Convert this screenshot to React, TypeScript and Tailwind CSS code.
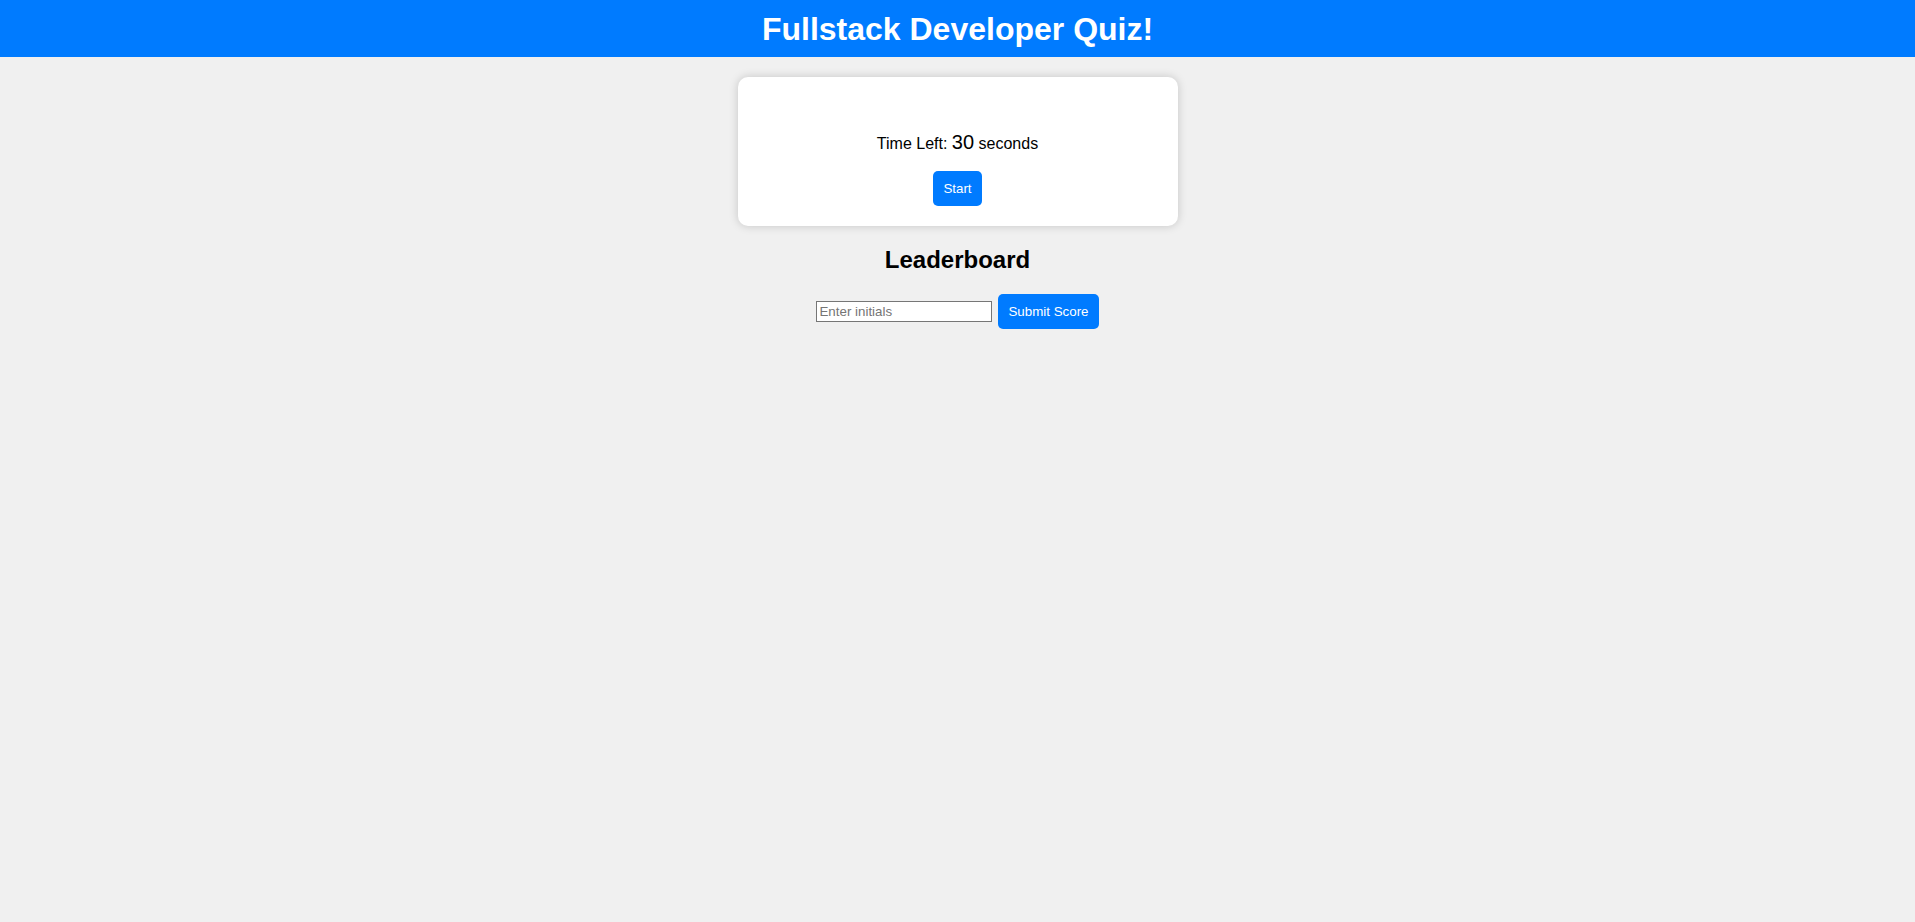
export default function App() {
  return (
    <div className="min-h-screen bg-[#f0f0f0] font-['Liberation_Sans',Arial,sans-serif] text-black">
      {/* Header */}
      <header className="flex h-[57px] items-center justify-center bg-[#007bff]">
        <h1 className="text-[32px] font-bold text-white">Fullstack Developer Quiz!</h1>
      </header>

      {/* Quiz card */}
      <div className="mx-auto mt-5 w-[440px] rounded-[10px] bg-white p-5 text-center shadow-[0_0_10px_rgba(0,0,0,0.18)]">
        <div className="h-[35px]" />
        <p className="text-[16px] leading-[23px]">
          Time Left: <span className="text-[20px] leading-none">30</span> seconds
        </p>
        <button className="mt-4 h-[35px] rounded-[5px] bg-[#007bff] px-2.5 text-[13.33px] text-white">
          Start
        </button>
      </div>

      {/* Leaderboard */}
      <h2 className="mt-5 text-center text-[24px] font-bold leading-[28px]">Leaderboard</h2>
      <div className="mt-5 flex items-center justify-center gap-1.5">
        <input
          type="text"
          placeholder="Enter initials"
          className="h-[21px] w-[176px] border border-[#767676] bg-white px-0.5 text-[13.33px] placeholder:text-[#757575]"
        />
        <button className="h-[35px] rounded-[5px] bg-[#007bff] px-2.5 text-[13.33px] text-white">
          Submit Score
        </button>
      </div>
    </div>
  );
}
